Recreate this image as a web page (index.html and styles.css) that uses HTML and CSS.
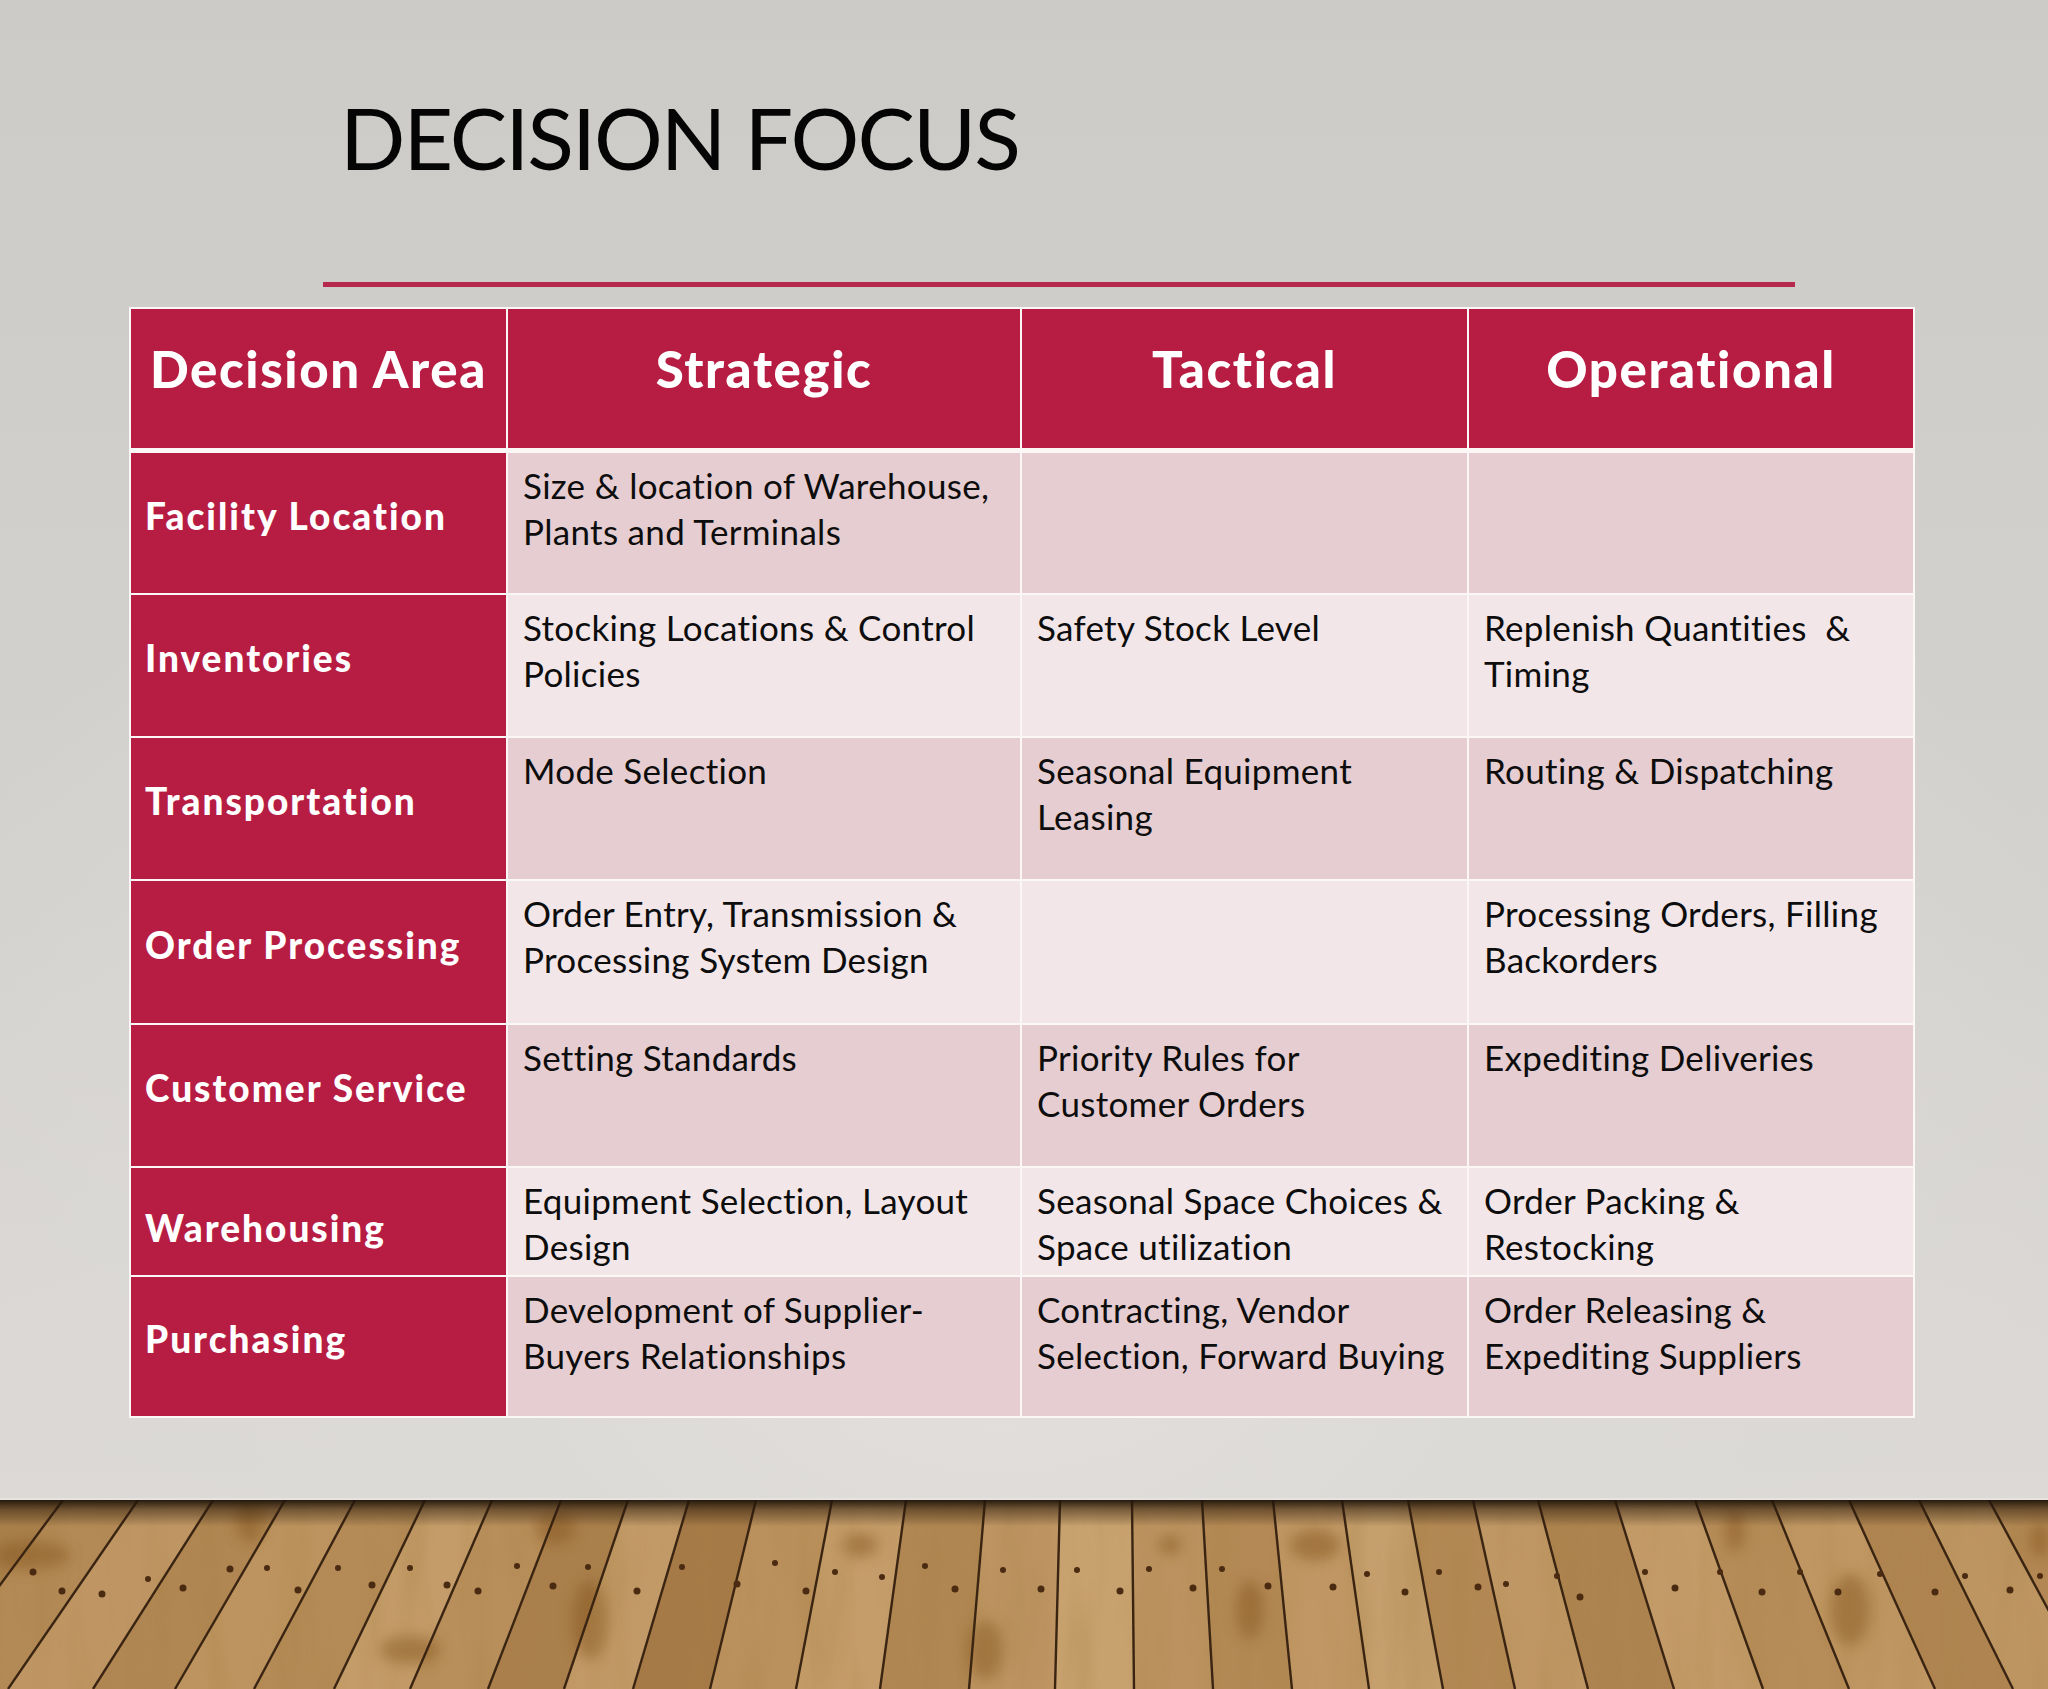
FILE: index.html
```html
<!DOCTYPE html>
<html lang="en">
<head>
<meta charset="utf-8">
<title>Decision Focus</title>
<link rel="stylesheet" href="styles.css">
</head>
<body>
<div class="slide">
  <div class="wall">
    <h1 class="title">DECISION FOCUS</h1>
    <div class="rule"></div>
    <div class="table">
      <div class="hd">Decision Area</div>
      <div class="hd">Strategic</div>
      <div class="hd">Tactical</div>
      <div class="hd">Operational</div>

      <div class="lbl">Facility Location</div>
      <div class="c dark">Size &amp; location of Warehouse,<br>Plants and Terminals</div>
      <div class="c dark"></div>
      <div class="c dark"></div>

      <div class="lbl">Inventories</div>
      <div class="c light">Stocking Locations &amp; Control<br>Policies</div>
      <div class="c light">Safety Stock Level</div>
      <div class="c light">Replenish Quantities&nbsp; &amp;<br>Timing</div>

      <div class="lbl">Transportation</div>
      <div class="c dark">Mode Selection</div>
      <div class="c dark">Seasonal Equipment<br>Leasing</div>
      <div class="c dark">Routing &amp; Dispatching</div>

      <div class="lbl">Order Processing</div>
      <div class="c light">Order Entry, Transmission &amp;<br>Processing System Design</div>
      <div class="c light"></div>
      <div class="c light">Processing Orders, Filling<br>Backorders</div>

      <div class="lbl">Customer Service</div>
      <div class="c dark">Setting Standards</div>
      <div class="c dark">Priority Rules for<br>Customer Orders</div>
      <div class="c dark">Expediting Deliveries</div>

      <div class="lbl lbl-low">Warehousing</div>
      <div class="c light">Equipment Selection, Layout<br>Design</div>
      <div class="c light">Seasonal Space Choices &amp;<br>Space utilization</div>
      <div class="c light">Order Packing &amp;<br>Restocking</div>

      <div class="lbl">Purchasing</div>
      <div class="c dark">Development of Supplier-<br>Buyers Relationships</div>
      <div class="c dark">Contracting, Vendor<br>Selection, Forward Buying</div>
      <div class="c dark">Order Releasing &amp;<br>Expediting Suppliers</div>
    </div>
  </div>
  <div class="floor">
    <svg class="floor-art" viewBox="0 0 2048 189" width="2048" height="189" preserveAspectRatio="none" aria-hidden="true">
      <defs>
        <filter id="grain" x="0" y="0" width="100%" height="100%">
          <feTurbulence type="fractalNoise" baseFrequency="0.03 0.005" numOctaves="3" seed="11"/>
          <feColorMatrix type="matrix" values="0 0 0 0 0.38  0 0 0 0 0.22  0 0 0 0 0.06  0 0 0 1.2 -0.5"/>
        </filter>
        <filter id="soft"><feGaussianBlur stdDeviation="7"/></filter>
        <linearGradient id="topshade" x1="0" y1="0" x2="0" y2="1">
          <stop offset="0" stop-color="#1e140a" stop-opacity="0.95"/>
          <stop offset="0.05" stop-color="#2a1a0c" stop-opacity="0.5"/>
          <stop offset="0.14" stop-color="#2a1a0c" stop-opacity="0"/>
        </linearGradient>
      </defs>
      <rect width="2048" height="189" fill="#b88f5c"/>
      <g class="planks">
        <polygon points="-10,0 63,0 -77,189 -160,189" fill="#a97f4b"/>
        <polygon points="63,0 138,0 8,189 -77,189" fill="#b38955"/>
        <polygon points="138,0 213,0 93,189 8,189" fill="#bf9663"/>
        <polygon points="213,0 285,0 175,189 93,189" fill="#b08652"/>
        <polygon points="285,0 355,0 254,189 175,189" fill="#bd945f"/>
        <polygon points="355,0 425,0 334,189 254,189" fill="#b48a56"/>
        <polygon points="425,0 492,0 410,189 334,189" fill="#c49c69"/>
        <polygon points="492,0 561,0 488,189 410,189" fill="#b88e5a"/>
        <polygon points="561,0 628,0 564,189 488,189" fill="#aa7f4c"/>
        <polygon points="628,0 689,0 633,189 564,189" fill="#c29a67"/>
        <polygon points="689,0 756,0 710,189 633,189" fill="#a67a46"/>
        <polygon points="756,0 832,0 796,189 710,189" fill="#ba905c"/>
        <polygon points="832,0 906,0 880,189 796,189" fill="#c59d6a"/>
        <polygon points="906,0 985,0 969,189 880,189" fill="#b08652"/>
        <polygon points="985,0 1060,0 1055,189 969,189" fill="#be9563"/>
        <polygon points="1060,0 1132,0 1134,189 1055,189" fill="#c8a26e"/>
        <polygon points="1132,0 1202,0 1213,189 1134,189" fill="#bc9360"/>
        <polygon points="1202,0 1273,0 1292,189 1213,189" fill="#b48955"/>
        <polygon points="1273,0 1342,0 1369,189 1292,189" fill="#c19865"/>
        <polygon points="1342,0 1408,0 1443,189 1369,189" fill="#c59f6c"/>
        <polygon points="1408,0 1473,0 1515,189 1443,189" fill="#b38854"/>
        <polygon points="1473,0 1538,0 1588,189 1515,189" fill="#bf9764"/>
        <polygon points="1538,0 1615,0 1674,189 1588,189" fill="#ad834f"/>
        <polygon points="1615,0 1695,0 1763,189 1674,189" fill="#c39b68"/>
        <polygon points="1695,0 1772,0 1849,189 1763,189" fill="#b68c58"/>
        <polygon points="1772,0 1849,0 1935,189 1849,189" fill="#c09763"/>
        <polygon points="1849,0 1919,0 2013,189 1935,189" fill="#af8450"/>
        <polygon points="1919,0 1989,0 2091,189 2013,189" fill="#bd9561"/>
        <polygon points="1989,0 2060,0 2170,189 2091,189" fill="#b28753"/>
      </g>
      <g class="knots" filter="url(#soft)" fill="#85551f" opacity="0.5">
        <ellipse cx="30" cy="55" rx="40" ry="14"/>
        <ellipse cx="250" cy="20" rx="14" ry="22"/>
        <ellipse cx="590" cy="120" rx="18" ry="40"/>
        <ellipse cx="555" cy="28" rx="20" ry="16"/>
        <ellipse cx="860" cy="45" rx="18" ry="12"/>
        <ellipse cx="1170" cy="45" rx="12" ry="10"/>
        <ellipse cx="1315" cy="45" rx="26" ry="16"/>
        <ellipse cx="1250" cy="110" rx="14" ry="30"/>
        <ellipse cx="1735" cy="30" rx="10" ry="22"/>
        <ellipse cx="1850" cy="110" rx="20" ry="36"/>
        <ellipse cx="2040" cy="40" rx="10" ry="18"/>
        <ellipse cx="410" cy="150" rx="30" ry="14"/>
        <ellipse cx="985" cy="150" rx="18" ry="30"/>
      </g>
      <rect width="2048" height="189" filter="url(#grain)" opacity="0.5"/>
      <g class="seams" stroke="#3a2412" stroke-width="2.4">
        <line x1="63" y1="0" x2="-77" y2="189"/>
        <line x1="138" y1="0" x2="8" y2="189"/>
        <line x1="213" y1="0" x2="93" y2="189"/>
        <line x1="285" y1="0" x2="175" y2="189"/>
        <line x1="355" y1="0" x2="254" y2="189"/>
        <line x1="425" y1="0" x2="334" y2="189"/>
        <line x1="492" y1="0" x2="410" y2="189"/>
        <line x1="561" y1="0" x2="488" y2="189"/>
        <line x1="628" y1="0" x2="564" y2="189"/>
        <line x1="689" y1="0" x2="633" y2="189"/>
        <line x1="756" y1="0" x2="710" y2="189"/>
        <line x1="832" y1="0" x2="796" y2="189"/>
        <line x1="906" y1="0" x2="880" y2="189"/>
        <line x1="985" y1="0" x2="969" y2="189"/>
        <line x1="1060" y1="0" x2="1055" y2="189"/>
        <line x1="1132" y1="0" x2="1134" y2="189"/>
        <line x1="1202" y1="0" x2="1213" y2="189"/>
        <line x1="1273" y1="0" x2="1292" y2="189"/>
        <line x1="1342" y1="0" x2="1369" y2="189"/>
        <line x1="1408" y1="0" x2="1443" y2="189"/>
        <line x1="1473" y1="0" x2="1515" y2="189"/>
        <line x1="1538" y1="0" x2="1588" y2="189"/>
        <line x1="1615" y1="0" x2="1674" y2="189"/>
        <line x1="1695" y1="0" x2="1763" y2="189"/>
        <line x1="1772" y1="0" x2="1849" y2="189"/>
        <line x1="1849" y1="0" x2="1935" y2="189"/>
        <line x1="1919" y1="0" x2="2013" y2="189"/>
        <line x1="1989" y1="0" x2="2091" y2="189"/>
      </g>
      <g class="nails" fill="#4a2a10">
        <circle cx="33" cy="72" r="3.5"/><circle cx="62" cy="91" r="3.5"/>
        <circle cx="102" cy="94" r="3.5"/><circle cx="148" cy="79" r="3"/>
        <circle cx="183" cy="88" r="3.5"/><circle cx="230" cy="69" r="3.5"/>
        <circle cx="267" cy="68" r="3"/><circle cx="298" cy="90" r="3.5"/>
        <circle cx="338" cy="68" r="3"/><circle cx="372" cy="85" r="3.5"/>
        <circle cx="410" cy="68" r="3"/><circle cx="447" cy="85" r="3.5"/>
        <circle cx="478" cy="91" r="3.5"/><circle cx="517" cy="66" r="3"/>
        <circle cx="553" cy="86" r="3.5"/><circle cx="588" cy="67" r="3"/>
        <circle cx="637" cy="91" r="3.5"/><circle cx="682" cy="67" r="3"/>
        <circle cx="737" cy="84" r="3.5"/><circle cx="775" cy="63" r="3"/>
        <circle cx="806" cy="91" r="3.5"/><circle cx="835" cy="72" r="3"/>
        <circle cx="882" cy="77" r="3"/><circle cx="925" cy="66" r="3"/>
        <circle cx="955" cy="89" r="3.5"/><circle cx="1003" cy="70" r="3"/>
        <circle cx="1041" cy="89" r="3.5"/><circle cx="1077" cy="70" r="3"/>
        <circle cx="1120" cy="91" r="3.5"/><circle cx="1149" cy="69" r="3"/>
        <circle cx="1193" cy="88" r="3.5"/><circle cx="1222" cy="69" r="3"/>
        <circle cx="1268" cy="86" r="3.5"/><circle cx="1333" cy="87" r="3.5"/>
        <circle cx="1367" cy="74" r="3"/><circle cx="1405" cy="92" r="3.5"/>
        <circle cx="1439" cy="72" r="3"/><circle cx="1478" cy="87" r="3.5"/>
        <circle cx="1506" cy="84" r="3"/><circle cx="1557" cy="76" r="3"/>
        <circle cx="1580" cy="97" r="3.5"/><circle cx="1645" cy="72" r="3"/>
        <circle cx="1675" cy="88" r="3.5"/><circle cx="1720" cy="72" r="3"/>
        <circle cx="1762" cy="92" r="3.5"/><circle cx="1800" cy="72" r="3"/>
        <circle cx="1838" cy="92" r="3.5"/><circle cx="1880" cy="74" r="3"/>
        <circle cx="1935" cy="92" r="3.5"/><circle cx="1965" cy="76" r="3"/>
        <circle cx="2010" cy="90" r="3.5"/><circle cx="2040" cy="76" r="3"/>
      </g>
      <rect width="2048" height="189" fill="url(#topshade)"/>
    </svg>
  </div>
</div>
</body>
</html>
```

FILE: styles.css
```css
* { box-sizing: border-box; }

html, body {
  margin: 0;
  padding: 0;
}

body {
  width: 2048px;
  height: 1689px;
  overflow: hidden;
  font-family: "Lato", "Open Sans", "DejaVu Sans", sans-serif;
  background: #d6d4d0;
}

.slide {
  width: 2048px;
  height: 1689px;
  display: flex;
  flex-direction: column;
}

.wall {
  height: 1500px;
  flex: 0 0 1500px;
  display: flex;
  flex-direction: column;
  background:
    radial-gradient(ellipse 1150px 950px at 1000px 1250px, #e3e0dd 0%, #dcdad6 45%, rgba(205,203,199,0) 100%),
    linear-gradient(180deg, #cdcbc7 0%, #d4d2ce 60%, #dcd9d6 100%);
  box-shadow: inset 0 -2px 0 #e6e3e0;
}

.title {
  margin: 0;
  padding: 94px 0 0 340px;
  font-size: 86px;
  line-height: 86px;
  height: 180px;
  font-weight: 400;
  color: #050505;
  letter-spacing: -2px;
}

.rule {
  margin: 102px 0 0 323px;
  width: 1472px;
  height: 5px;
  background: #b7284d;
}

.table {
  margin: 20px 0 0 129px;
  width: 1786px;
  display: grid;
  grid-template-columns: 375px 512px 445px 444px;
  grid-template-rows: 142px 140px 141px 141px 142px 141px 107px 139px;
  gap: 2px;
  padding: 2px;
  background: #fbf7f7;
}

.hd {
  background: #b71d43;
  color: #fff;
  font-weight: 900;
  font-size: 51px;
  letter-spacing: 1.6px;
  line-height: 60px;
  margin-bottom: 3px;
  display: flex;
  align-items: center;
  justify-content: center;
  padding-bottom: 20px;
  white-space: nowrap;
}

.lbl {
  background: #b71d43;
  color: #fff;
  font-weight: 900;
  font-size: 37px;
  letter-spacing: 2px;
  line-height: 44px;
  display: flex;
  align-items: center;
  padding: 0 0 15px 14px;
  white-space: nowrap;
}

.lbl-low {
  padding: 12px 0 0 14px;
}

.c {
  font-size: 35px;
  letter-spacing: 0.3px;
  line-height: 46px;
  color: #0d0d0d;
  padding: 9px 8px 0 15px;
  white-space: nowrap;
}

.dark { background: #e6cdd1; }
.light { background: #f2e6e8; }

.floor {
  height: 189px;
  flex: 0 0 189px;
  overflow: hidden;
}

.floor-art {
  display: block;
}
```
